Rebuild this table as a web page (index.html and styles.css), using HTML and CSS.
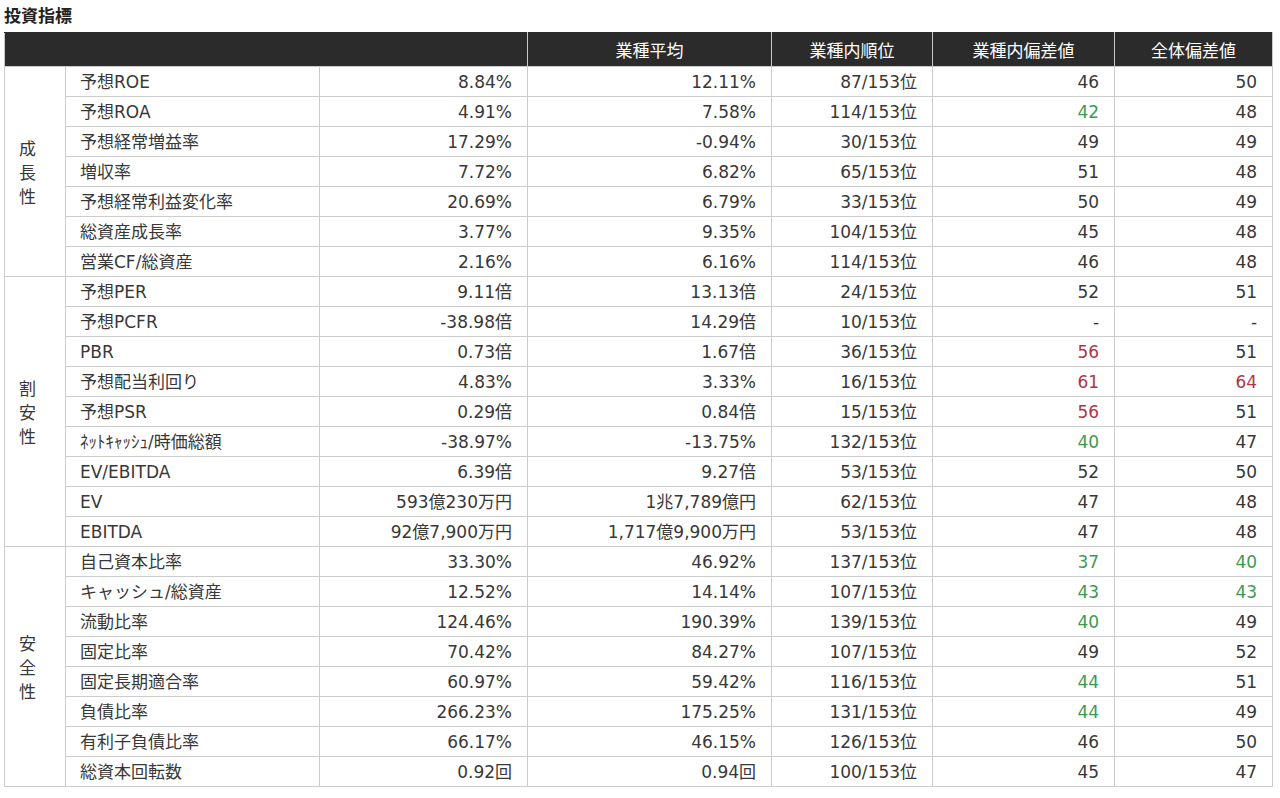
FILE: index.html
```html
<!DOCTYPE html>
<html lang="ja">
<head>
<meta charset="utf-8">
<title>投資指標</title>
<link rel="stylesheet" href="styles.css">
</head>
<body>
<h2 class="title">投資指標</h2>
<table class="idx">
  <colgroup>
    <col class="c-cat"><col class="c-name"><col class="c-val"><col class="c-avg"><col class="c-rank"><col class="c-dev1"><col class="c-dev2">
  </colgroup>
  <thead>
    <tr><th colspan="3"></th><th>業種平均</th><th>業種内順位</th><th>業種内偏差値</th><th>全体偏差値</th></tr>
  </thead>
  <tbody>
    <tr><td class="cat" rowspan="7">成<br>長<br>性</td><td class="name">予想ROE</td><td>8.84%</td><td>12.11%</td><td>87/153位</td><td>46</td><td>50</td></tr>
    <tr><td class="name">予想ROA</td><td>4.91%</td><td>7.58%</td><td>114/153位</td><td class="g">42</td><td>48</td></tr>
    <tr><td class="name">予想経常増益率</td><td>17.29%</td><td>-0.94%</td><td>30/153位</td><td>49</td><td>49</td></tr>
    <tr><td class="name">増収率</td><td>7.72%</td><td>6.82%</td><td>65/153位</td><td>51</td><td>48</td></tr>
    <tr><td class="name">予想経常利益変化率</td><td>20.69%</td><td>6.79%</td><td>33/153位</td><td>50</td><td>49</td></tr>
    <tr><td class="name">総資産成長率</td><td>3.77%</td><td>9.35%</td><td>104/153位</td><td>45</td><td>48</td></tr>
    <tr><td class="name">営業CF/総資産</td><td>2.16%</td><td>6.16%</td><td>114/153位</td><td>46</td><td>48</td></tr>

    <tr><td class="cat" rowspan="9">割<br>安<br>性</td><td class="name">予想PER</td><td>9.11倍</td><td>13.13倍</td><td>24/153位</td><td>52</td><td>51</td></tr>
    <tr><td class="name">予想PCFR</td><td>-38.98倍</td><td>14.29倍</td><td>10/153位</td><td>-</td><td>-</td></tr>
    <tr><td class="name">PBR</td><td>0.73倍</td><td>1.67倍</td><td>36/153位</td><td class="r">56</td><td>51</td></tr>
    <tr><td class="name">予想配当利回り</td><td>4.83%</td><td>3.33%</td><td>16/153位</td><td class="r">61</td><td class="r">64</td></tr>
    <tr><td class="name">予想PSR</td><td>0.29倍</td><td>0.84倍</td><td>15/153位</td><td class="r">56</td><td>51</td></tr>
    <tr><td class="name">ﾈｯﾄｷｬｯｼｭ/時価総額</td><td>-38.97%</td><td>-13.75%</td><td>132/153位</td><td class="g">40</td><td>47</td></tr>
    <tr><td class="name">EV/EBITDA</td><td>6.39倍</td><td>9.27倍</td><td>53/153位</td><td>52</td><td>50</td></tr>
    <tr><td class="name">EV</td><td>593億230万円</td><td>1兆7,789億円</td><td>62/153位</td><td>47</td><td>48</td></tr>
    <tr><td class="name">EBITDA</td><td>92億7,900万円</td><td>1,717億9,900万円</td><td>53/153位</td><td>47</td><td>48</td></tr>

    <tr><td class="cat" rowspan="8">安<br>全<br>性</td><td class="name">自己資本比率</td><td>33.30%</td><td>46.92%</td><td>137/153位</td><td class="g">37</td><td class="g">40</td></tr>
    <tr><td class="name">キャッシュ/総資産</td><td>12.52%</td><td>14.14%</td><td>107/153位</td><td class="g">43</td><td class="g">43</td></tr>
    <tr><td class="name">流動比率</td><td>124.46%</td><td>190.39%</td><td>139/153位</td><td class="g">40</td><td>49</td></tr>
    <tr><td class="name">固定比率</td><td>70.42%</td><td>84.27%</td><td>107/153位</td><td>49</td><td>52</td></tr>
    <tr><td class="name">固定長期適合率</td><td>60.97%</td><td>59.42%</td><td>116/153位</td><td class="g">44</td><td>51</td></tr>
    <tr><td class="name">負債比率</td><td>266.23%</td><td>175.25%</td><td>131/153位</td><td class="g">44</td><td>49</td></tr>
    <tr><td class="name">有利子負債比率</td><td>66.17%</td><td>46.15%</td><td>126/153位</td><td>46</td><td>50</td></tr>
    <tr><td class="name">総資本回転数</td><td>0.92回</td><td>0.94回</td><td>100/153位</td><td>45</td><td>47</td></tr>
  </tbody>
</table>
</body>
</html>
```

FILE: styles.css
```css
html, body {
  margin: 0;
  padding: 0;
  background: #fff;
}
body {
  font-family: "DejaVu Sans", "Noto Sans CJK JP", sans-serif;
  color: #333;
  padding: 0 0 0 4px;
}
.title {
  margin: 0;
  height: 32px;
  line-height: 30px;
  font-size: 17px;
  font-weight: bold;
  color: #222;
  font-family: "Noto Sans CJK JP", sans-serif;
}
.idx {
  border-collapse: collapse;
  table-layout: fixed;
  width: 1268px;
  font-size: 17px;
}
.c-cat { width: 61px; }
.c-name { width: 254px; }
.c-val { width: 208px; }
.c-avg { width: 244px; }
.c-rank { width: 161px; }
.c-dev1 { width: 182px; }
.c-dev2 { width: 158px; }
.idx th {
  background: #2b2b2b;
  color: #fff;
  font-weight: normal;
  height: 33px;
  padding: 0;
  border: 1px solid #c8c8c8;
  border-top-color: #2b2b2b;
  text-align: center;
  font-family: "Noto Sans CJK JP", sans-serif;
  font-size: 17px;
  line-height: 20px;
}
.idx td {
  height: 29px;
  padding: 0 15px 0 14px;
  border: 1px solid #cccccc;
  text-align: right;
  line-height: 20px;
  white-space: nowrap;
  color: #383838;
}
.idx td.name {
  text-align: left;
  padding-left: 14px;
}
.idx td.cat {
  text-align: left;
  padding-left: 14px;
  line-height: 24px;
  font-family: "Noto Sans CJK JP", sans-serif;
  font-size: 17px;
}
.idx td.g { color: #3d9a52; }
.idx td.r { color: #b03447; }
```
